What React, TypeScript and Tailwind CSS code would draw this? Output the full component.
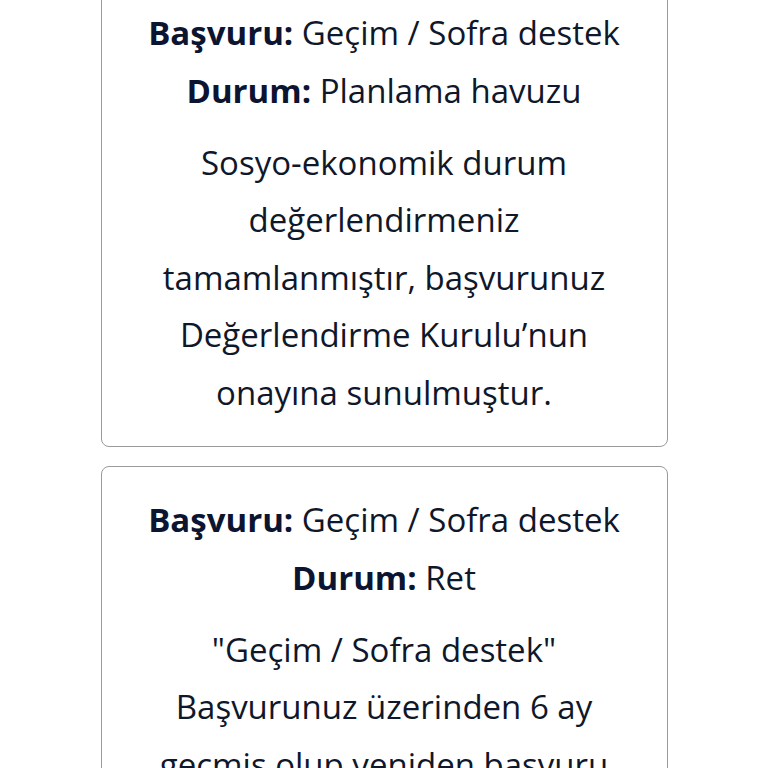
function Card({ app, status, lines }: { app: string; status: string; lines: string[] }) {
  return (
    <div className="w-[567px] mx-auto border-[1.5px] border-[#9a9a9a] rounded-[8px] bg-white pt-[24px] pb-[25px] text-center text-[33px] leading-[57.5px] text-[#0f172a]">
      <div className="whitespace-nowrap">
        <span className="font-bold text-[#0b1430]">Başvuru:</span> {app}
      </div>
      <div className="whitespace-nowrap">
        <span className="font-bold text-[#0b1430]">Durum:</span> {status}
      </div>
      <div className="mt-[14.5px]">
        {lines.map((l, i) => (
          <div key={i} className="whitespace-nowrap">
            {l}
          </div>
        ))}
      </div>
    </div>
  );
}

export default function App() {
  return (
    <div
      className="w-[768px] h-[768px] overflow-hidden bg-white"
      style={{ fontFamily: '"Open Sans", sans-serif' }}
    >
      <div className="mt-[-21px] flex flex-col gap-[19px]">
        <Card
          app="Geçim / Sofra destek"
          status="Planlama havuzu"
          lines={[
            "Sosyo-ekonomik durum",
            "değerlendirmeniz",
            "tamamlanmıştır, başvurunuz",
            "Değerlendirme Kurulu’nun",
            "onayına sunulmuştur.",
          ]}
        />
        <Card
          app="Geçim / Sofra destek"
          status="Ret"
          lines={[
            "\"Geçim / Sofra destek\"",
            "Başvurunuz üzerinden 6 ay",
            "geçmiş olup yeniden başvuru",
            "yapabilirsiniz.",
          ]}
        />
      </div>
    </div>
  );
}
